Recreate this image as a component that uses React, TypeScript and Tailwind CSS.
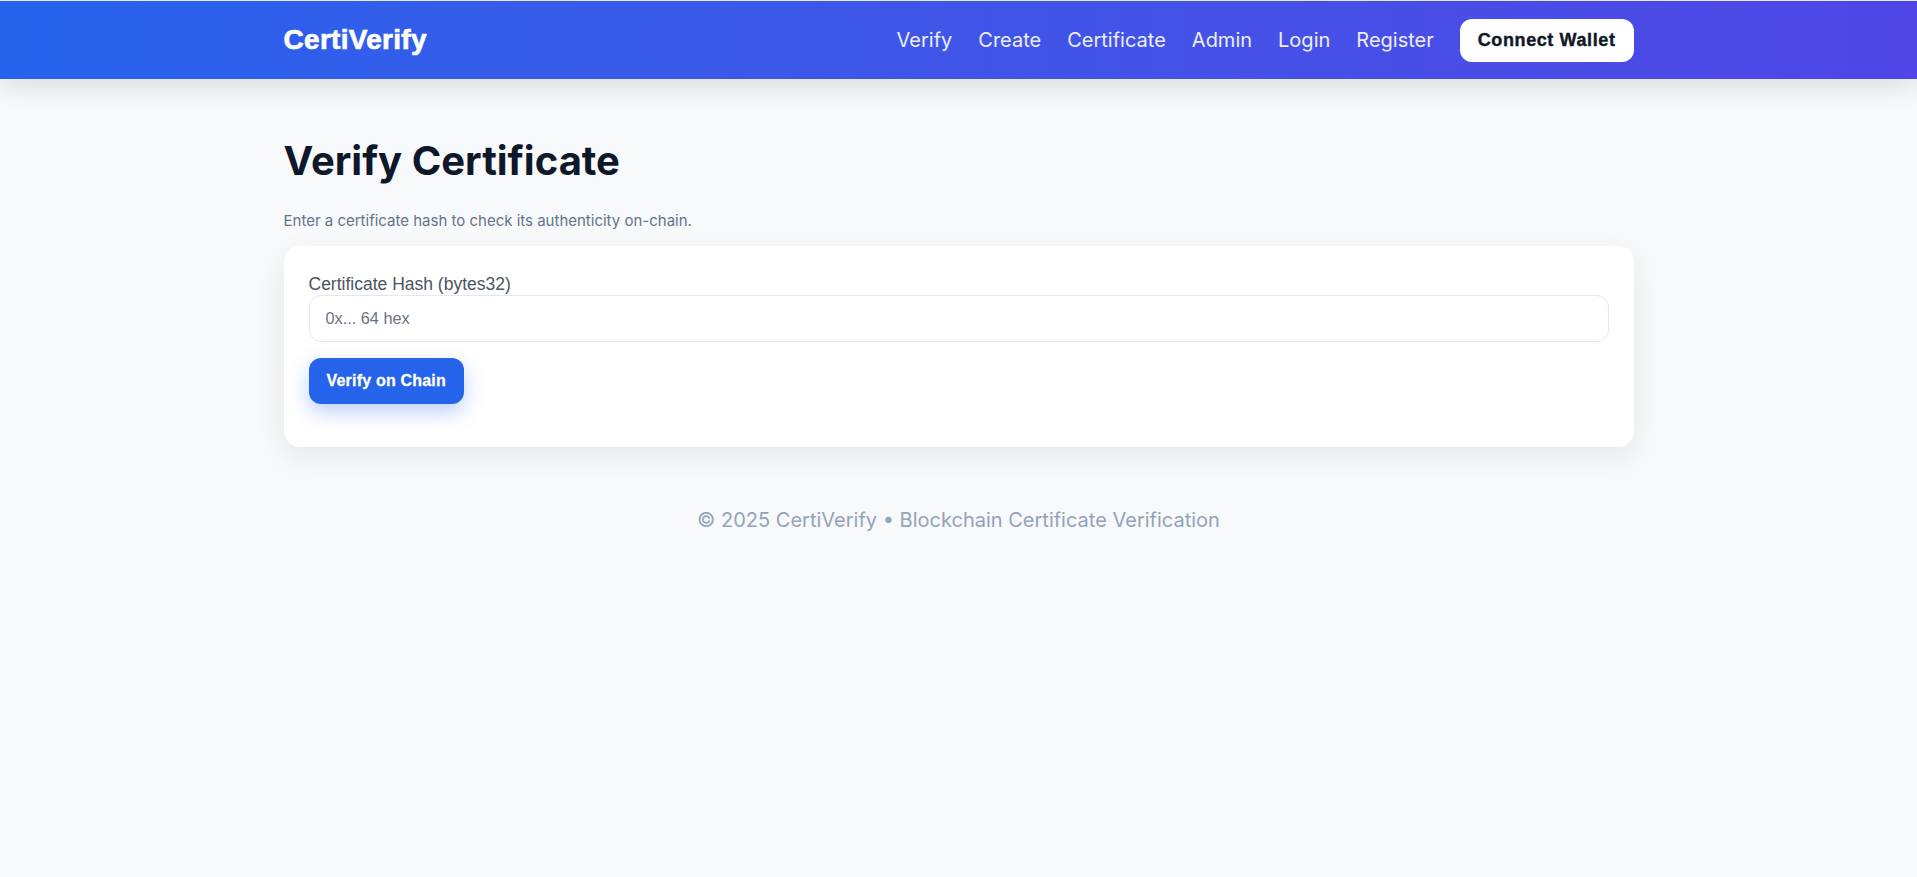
import { useState } from "react";

const NAV_LINKS = ["Verify", "Create", "Certificate", "Admin", "Login", "Register"];

const arial = "font-['Liberation_Sans',Arial,sans-serif]";
const inter = "font-['Inter','Noto_Sans',sans-serif]";

function Header() {
  return (
    <header className="relative z-10 border-t border-[#e5e7eb] bg-gradient-to-r from-[#2563eb] to-[#4f46e5] shadow-[0_8px_24px_rgba(15,23,42,0.12)]">
      <div className="mx-auto flex h-[78px] max-w-[1350px] items-center justify-between">
        <a
          href="#"
          className={`${arial} text-[28px] font-bold tracking-[0.3px] text-white [-webkit-text-stroke:0.7px_white]`}
        >
          CertiVerify
        </a>
        <nav className={`${inter} flex items-center gap-[26px] text-[20px] text-white/90`}>
          {NAV_LINKS.map((label) => (
            <a key={label} href="#" className="hover:text-white">
              {label}
            </a>
          ))}
          <button
            type="button"
            className={`${arial} h-[43px] rounded-xl bg-white px-[18px] text-[18px] font-bold tracking-[0.6px] text-[#111827] [-webkit-text-stroke:0.4px_#111827]`}
          >
            Connect Wallet
          </button>
        </nav>
      </div>
    </header>
  );
}

export default function App() {
  const [hash, setHash] = useState("");

  return (
    <div className={`${inter} min-h-[877px] bg-[#f8f9fb]`}>
      <Header />

      <main className="mx-auto max-w-[1350px] pt-[58px]">
        <h1 className="text-[40px] leading-[48px] font-bold text-[#0f172a]">Verify Certificate</h1>
        <p className="mt-[25px] text-[15px] leading-[22px] text-[#64748b]">
          Enter a certificate hash to check its authenticity on-chain.
        </p>

        {/* verify form */}
        <section className="mt-[14px] rounded-2xl bg-white px-[25px] pt-[27px] pb-[43px] shadow-[0_10px_30px_rgba(15,23,42,0.08)]">
          <label className={`${arial} block text-[17.5px] leading-[22px] text-[#4b5563]`}>
            Certificate Hash (bytes32)
          </label>
          <input
            value={hash}
            onChange={(e) => setHash(e.target.value)}
            placeholder="0x... 64 hex"
            className={`${arial} block h-[47px] w-full rounded-xl border border-[#e5e7eb] px-4 text-[16.3px] text-[#111827] outline-none placeholder:text-[#6b7280]`}
          />
          <button
            type="button"
            className={`${arial} mt-4 h-[46px] rounded-xl bg-[#2563eb] px-[18px] text-[16px] font-bold tracking-[0.2px] text-white shadow-[0_8px_20px_rgba(37,99,235,0.3)] [-webkit-text-stroke:0.3px_white]`}
          >
            Verify on Chain
          </button>
        </section>
      </main>

      <footer className="pt-[59px] text-center text-[20px] leading-7 text-[#94a3b8]">
        © 2025 CertiVerify • Blockchain Certificate Verification
      </footer>
    </div>
  );
}
